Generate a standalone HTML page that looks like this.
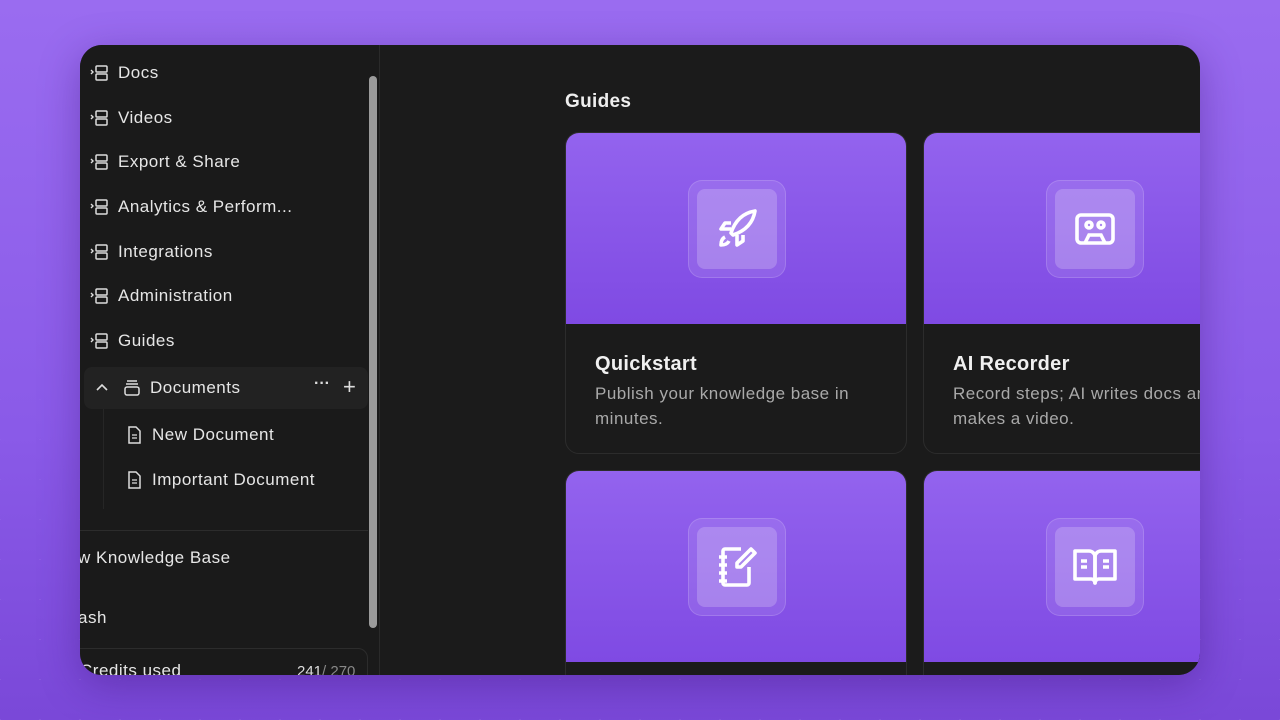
<!DOCTYPE html>
<html><head><style>
*{margin:0;padding:0;box-sizing:border-box}
html,body{width:1280px;height:720px;overflow:hidden}
body{font-family:"Liberation Sans",sans-serif;
background:linear-gradient(180deg,#9a6cf0 0%,#8a5ae8 60%,#7a48d8 100%);position:relative}
.pat{position:absolute;inset:0;opacity:.10;background-image:linear-gradient(45deg,#fff 1px,transparent 1px),linear-gradient(-45deg,#fff 1px,transparent 1px);background-size:40px 40px;-webkit-mask-image:linear-gradient(180deg,transparent 40%,#000 90%)}
.win{position:absolute;left:80px;top:45px;width:1120px;height:630px;background:#1b1b1b;border-radius:22px;overflow:hidden;box-shadow:0 10px 40px rgba(60,20,120,.4)}
.side{position:absolute;left:0;top:0;width:300px;height:630px;background:#1a1a1a;border-right:1px solid #2a2a2a;overflow:hidden}
.it{position:absolute;left:10px;color:#e6e6e6;font-size:17px;letter-spacing:.5px;display:flex;align-items:center;gap:8px;white-space:nowrap}
.sb{position:absolute;left:289px;top:31px;width:8px;height:552px;background:#9b9b9b;border-radius:4px}
.card{position:absolute;width:342px;height:322px;border:1px solid #2c2c2c;border-radius:14px;overflow:hidden;background:#1b1b1b}
.top{height:191px;background:linear-gradient(180deg,#9363ee,#7f4ae3);position:relative}
.ob{position:absolute;left:122px;top:47px;width:98px;height:98px;border-radius:14px;background:rgba(255,255,255,.1);border:1px solid rgba(255,255,255,.15)}
.ib{position:absolute;left:8px;top:8px;width:80px;height:80px;border-radius:8px;background:rgba(255,255,255,.2);display:flex;align-items:center;justify-content:center}
.t{position:absolute;left:29px;top:220px;color:#f0f0f0;font-size:20px;font-weight:bold;letter-spacing:.3px}
.d{position:absolute;left:29px;top:248px;color:#a9a9a9;font-size:17px;letter-spacing:.5px;line-height:25px;width:330px;white-space:nowrap}
</style></head><body><div class="pat"></div>
<div class="win">
<div class="side">
<svg width="0" height="0" style="position:absolute"><defs><g id="ic"><path d="M1 7l2 2-2 2" stroke="#ddd" fill="none" stroke-width="1.4"/><rect x="6" y="3" width="11" height="6" rx="1" stroke="#ddd" fill="none" stroke-width="1.5"/><rect x="6" y="11" width="11" height="6" rx="1" stroke="#ddd" fill="none" stroke-width="1.5"/></g></defs></svg>
<div class="it" style="top:18px"><svg width="20" height="20"><use href="#ic"/></svg>Docs</div>
<div class="it" style="top:63px"><svg width="20" height="20"><use href="#ic"/></svg>Videos</div>
<div class="it" style="top:107px"><svg width="20" height="20"><use href="#ic"/></svg>Export &amp; Share</div>
<div class="it" style="top:152px"><svg width="20" height="20"><use href="#ic"/></svg>Analytics &amp; Perform...</div>
<div class="it" style="top:197px"><svg width="20" height="20"><use href="#ic"/></svg>Integrations</div>
<div class="it" style="top:241px"><svg width="20" height="20"><use href="#ic"/></svg>Administration</div>
<div class="it" style="top:286px"><svg width="20" height="20"><use href="#ic"/></svg>Guides</div>
<div style="position:absolute;left:4px;top:322px;width:284px;height:42px;background:#222;border-radius:8px"></div>
<div class="it" style="top:333px;left:14px"><svg width="16" height="16"><path d="M3 10l5-5 5 5" stroke="#ddd" fill="none" stroke-width="1.6"/></svg>
<svg width="20" height="20" style="margin-left:4px"><path d="M5 3h10M4 6h12" stroke="#ddd" stroke-width="1.5"/><rect x="3" y="9" width="14" height="8" rx="2" stroke="#ddd" fill="none" stroke-width="1.5"/></svg>Documents</div>
<div style="position:absolute;left:234px;top:330px;color:#ddd;font-size:16px;font-weight:bold">···</div>
<div style="position:absolute;left:263px;top:329px;color:#ddd;font-size:22px">+</div>
<div style="position:absolute;left:23px;top:364px;width:1px;height:100px;background:#262626"></div>
<div class="it" style="top:380px;left:44px"><svg width="20" height="20"><path d="M5 2h7l4 4v12H5z" stroke="#ddd" fill="none" stroke-width="1.5"/><path d="M8 10h5M8 13h5" stroke="#ddd" stroke-width="1.3"/></svg>New Document</div>
<div class="it" style="top:425px;left:44px"><svg width="20" height="20"><path d="M5 2h7l4 4v12H5z" stroke="#ddd" fill="none" stroke-width="1.5"/><path d="M8 10h5M8 13h5" stroke="#ddd" stroke-width="1.3"/></svg>Important Document</div>
<div style="position:absolute;left:0;top:485px;width:288px;height:1px;background:#2c2c2c"></div>
<div class="it" style="top:503px;left:-2px">w Knowledge Base</div>
<div class="it" style="top:563px;left:-2px">ash</div>
<div style="position:absolute;left:-10px;top:603px;width:298px;height:60px;border:1px solid #2c2c2c;border-radius:10px"></div>
<div class="it" style="top:616px;left:0">Credits used</div>
<div style="position:absolute;left:217px;top:618px;font-size:15px;color:#ddd">241<span style="color:#888">/ 270</span></div>
<div class="sb"></div>
</div>
<div style="position:absolute;left:485px;top:46px;color:#eee;font-size:19px;font-weight:bold;letter-spacing:.3px">Guides</div>
<div class="card" style="left:485px;top:87px"><div class="top"><div class="ob"><div class="ib">
<svg width="48" height="48" viewBox="0 0 24 24" fill="none" stroke="#fff" stroke-width="1.8" stroke-linejoin="round"><path d="M10 15l-1-1c2-6 6-10 12-11-1 6-5 10-11 12z"/><path d="M9 9H6l-2 3h5M15 15v3l-3 2v-5"/><path d="M6 16c-2 1-2 3-2 4 1 0 3 0 4-2"/></svg></div></div></div>
<div class="t">Quickstart</div><div class="d">Publish your knowledge base in<br>minutes.</div></div>
<div class="card" style="left:843px;top:87px;width:360px"><div class="top"><div class="ob"><div class="ib">
<svg width="48" height="48" viewBox="0 0 24 24" fill="none" stroke="#fff" stroke-width="1.8"><rect x="3" y="5" width="18" height="14" rx="2"/><circle cx="9" cy="10" r="1.5"/><circle cx="15" cy="10" r="1.5"/><path d="M7 19l2-4h6l2 4"/></svg></div></div></div>
<div class="t">AI Recorder</div><div class="d">Record steps; AI writes docs and<br>makes a video.</div></div>
<div class="card" style="left:485px;top:425px"><div class="top"><div class="ob"><div class="ib">
<svg width="48" height="48" viewBox="0 0 24 24" fill="none" stroke="#fff" stroke-width="1.8" stroke-linejoin="round"><path d="M14 3H6a1 1 0 00-1 1v16a1 1 0 001 1h11a1 1 0 001-1v-8"/><path d="M3 7h4M3 11h4M3 15h4M3 19h4"/><path d="M19 3l2 2-7 7h-2v-2z"/></svg></div></div></div></div>
<div class="card" style="left:843px;top:425px;width:360px"><div class="top"><div class="ob"><div class="ib">
<svg width="48" height="48" viewBox="0 0 24 24" fill="none" stroke="#fff" stroke-width="1.8" stroke-linejoin="round"><path d="M2 4h7a3 3 0 013 3v13a2 2 0 00-2-2H2z"/><path d="M22 4h-7a3 3 0 00-3 3v13a2 2 0 012-2h8z"/><path d="M5 9h3M5 12h3M16 9h3M16 12h3"/></svg></div></div></div></div>
</div>
</body></html>
